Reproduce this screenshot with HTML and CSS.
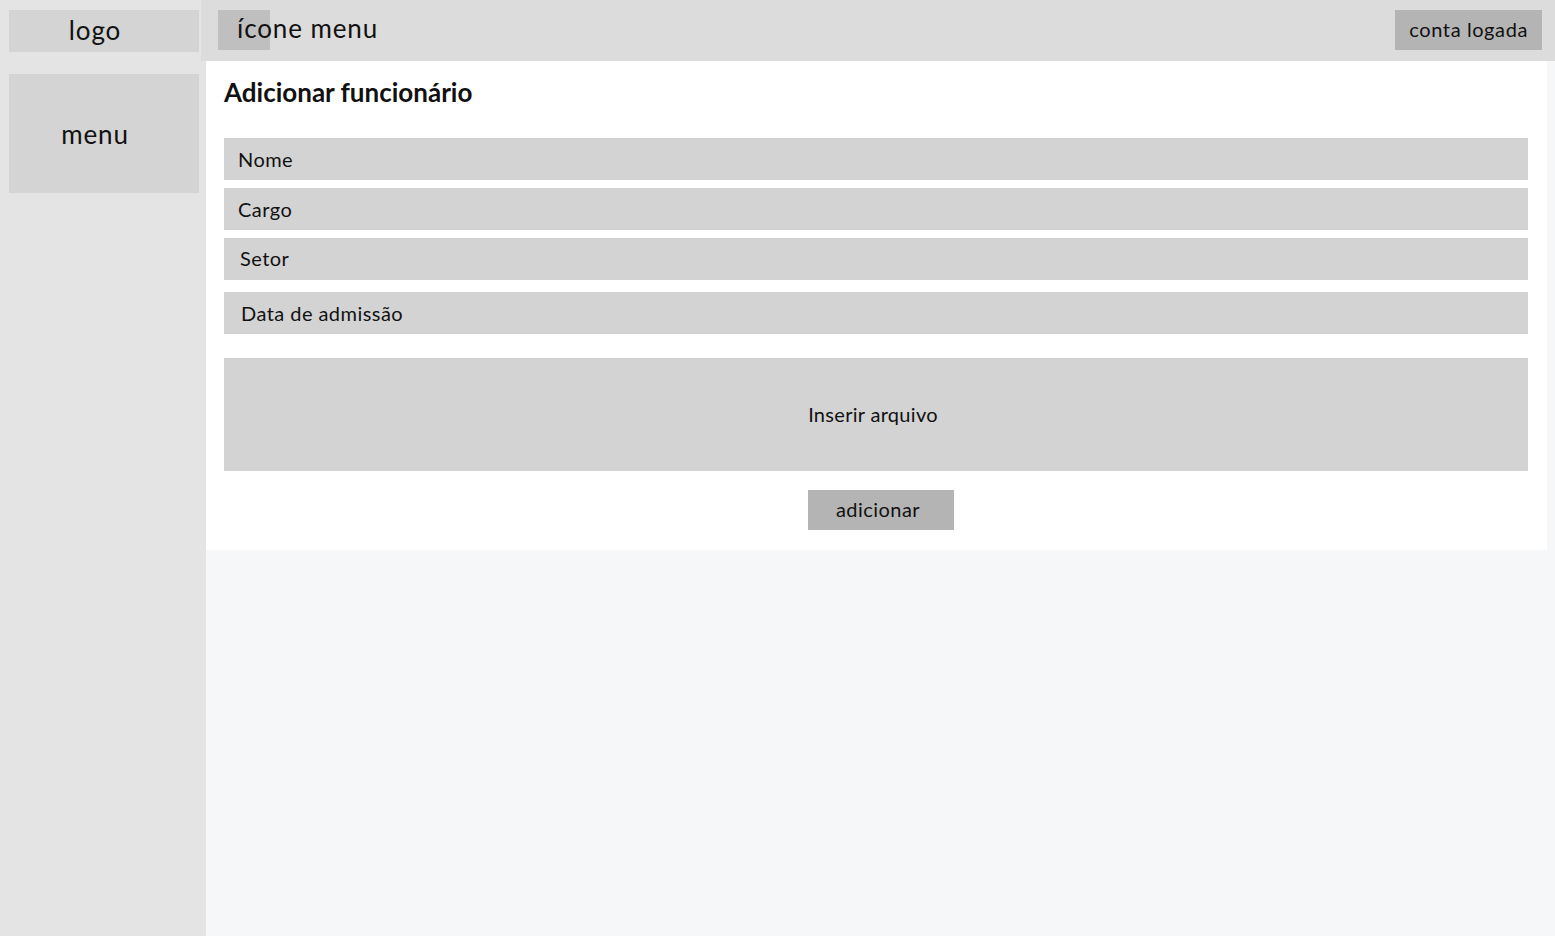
FILE: index.html
```html
<!DOCTYPE html>
<html lang="pt-BR">
<head>
<meta charset="utf-8">
<title>Adicionar funcionário</title>
<link rel="stylesheet" href="styles.css">
</head>
<body>
<div class="app">
  <aside class="sidebar">
    <div class="logo">logo</div>
    <div class="menu">menu</div>
  </aside>
  <div class="main">
    <header class="topbar">
      <div class="menu-toggle">
        <span class="menu-icon"></span>
        <span class="menu-label">ícone menu</span>
      </div>
      <div class="account">conta logada</div>
    </header>
    <section class="content">
      <div class="card">
        <h1 class="title">Adicionar funcionário</h1>
        <div class="fields">
          <div class="field">Nome</div>
          <div class="field">Cargo</div>
          <div class="field field-setor">Setor</div>
          <div class="field field-data">Data de admissão</div>
        </div>
        <div class="upload">Inserir arquivo</div>
        <div class="actions">
          <button class="btn">adicionar</button>
        </div>
      </div>
    </section>
  </div>
</div>
</body>
</html>
```

FILE: styles.css
```css
* { box-sizing: border-box; }
html, body { margin: 0; padding: 0; height: 100%; }
body {
  font-family: "Lato", "Open Sans", sans-serif;
  color: #111;
  background: #f6f7f9;
}
.app {
  display: flex;
  height: 936px;
}
.sidebar {
  width: 206px;
  flex: 0 0 206px;
  background: #e4e4e4;
  padding: 10px 7px 0 9px;
  display: flex;
  flex-direction: column;
  gap: 22px;
}
.logo {
  height: 42px;
  background: #d4d4d4;
  display: flex;
  align-items: center;
  justify-content: center;
  font-size: 26px;
  letter-spacing: 0.9px;
  padding: 0 18px 2px 0;
}
.menu {
  height: 119px;
  background: #d4d4d4;
  display: flex;
  align-items: center;
  justify-content: center;
  font-size: 26px;
  letter-spacing: 0.9px;
  padding: 0 18px 0 0;
}
.main {
  flex: 1;
  display: flex;
  flex-direction: column;
  min-width: 0;
}
.topbar {
  margin-left: -5px;
  height: 61px;
  background: #dcdcdc;
  display: flex;
  align-items: center;
  justify-content: space-between;
  padding: 0 13px 1px 17px;
}
.menu-toggle {
  position: relative;
  height: 40px;
  display: flex;
  align-items: center;
}
.menu-icon {
  position: absolute;
  left: 0;
  top: 0;
  width: 52px;
  height: 40px;
  background: #bfbfbf;
}
.menu-label {
  position: relative;
  margin-left: 19px;
  font-size: 26px;
  letter-spacing: 0.9px;
  padding-bottom: 5px;
}
.account {
  height: 40px;
  background: #b4b4b4;
  padding: 0 14px;
  display: flex;
  align-items: center;
  font-size: 20px;
  letter-spacing: 0.6px;
  padding-bottom: 3px;
}
.content {
  flex: 1;
  padding: 0 8px 0 0;
}
.card {
  background: #ffffff;
  padding: 14px 19px 20px 18px;
}
.title {
  margin: 0;
  font-size: 26px;
  font-weight: 700;
  line-height: 34px;
}
.fields {
  margin-top: 29px;
  display: flex;
  flex-direction: column;
  gap: 8px;
}
.field {
  height: 42px;
  background: #d3d3d3;
  display: flex;
  align-items: center;
  padding-left: 14px;
  font-size: 20px;
  letter-spacing: 0.45px;
}
.field-setor { padding-left: 16px; padding-bottom: 2px; }
.field-data { margin-top: 4px; padding-left: 17px; }
.upload {
  margin-top: 24px;
  height: 113px;
  background: #d3d3d3;
  display: flex;
  align-items: center;
  justify-content: center;
  font-size: 20px;
  letter-spacing: 0.3px;
  padding: 0 6px 2px 0;
}
.actions {
  margin-top: 19px;
  display: flex;
  justify-content: center;
}
.btn {
  width: 146px;
  height: 40px;
  border: 0;
  background: #b4b4b4;
  font-family: inherit;
  font-size: 20px;
  letter-spacing: 0.45px;
  color: #111;
  margin-left: 10px;
  padding: 0 6px 2px 0;
}
```
